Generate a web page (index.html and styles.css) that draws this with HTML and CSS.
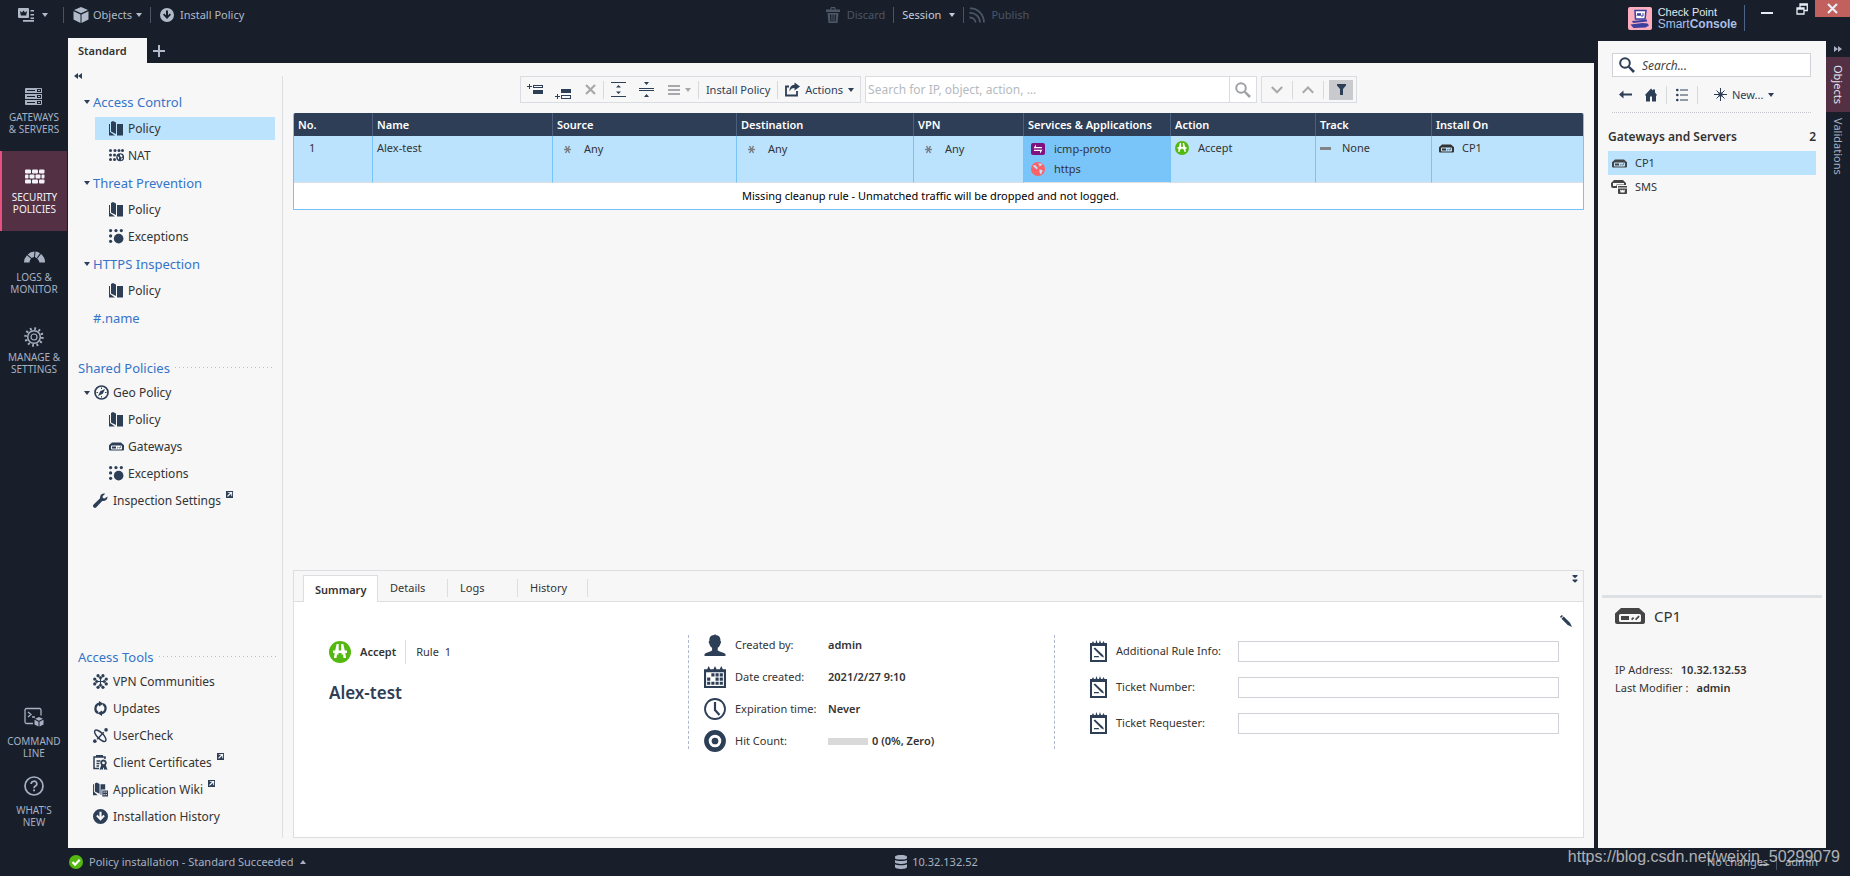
FILE: index.html
```html
<!DOCTYPE html>
<html lang="en">
<head>
<meta charset="utf-8">
<title>SmartConsole - Security Policies</title>
<link rel="stylesheet" href="styles.css">
</head>
<body>
<svg class="sprite" aria-hidden="true">
  <symbol id="i-caret" viewBox="0 0 6 4"><path d="M0 0h6L3 4z"/></symbol>
  <symbol id="i-caret-up" viewBox="0 0 6 4"><path d="M0 4h6L3 0z"/></symbol>
  <symbol id="i-menu" viewBox="0 0 17 14"><path fill-rule="evenodd" d="M1 0h9a1 1 0 0 1 1 1v8a1 1 0 0 1-1 1H1a1 1 0 0 1-1-1V1a1 1 0 0 1 1-1zm1 3 .8 4.500h5.400L9 3 7 4.500 5.500 2.500 4 4.500z"/><path d="M12.500 2H16v1.500h-3.500zM12.500 6H16v1.500h-3.500zM12.500 9.500H16V11h-3.500zM5 12h11v1.800H5z"/></symbol>
  <symbol id="i-cube" viewBox="0 0 16 16"><path d="M8 0l7 3-7 3.200L1 3zM.5 4.200l7 3.200V16l-7-3.500zM15.500 4.200l-7 3.200V16l7-3.500z"/></symbol>
  <symbol id="i-install" viewBox="0 0 14 14"><path fill-rule="evenodd" d="M7 0a7 7 0 1 1 0 14A7 7 0 0 1 7 0zM6 2.500v4.700L4.200 5.400 3 6.700l4 4.300 4-4.300-1.200-1.300L8 7.200V2.500z"/></symbol>
  <symbol id="i-trash" viewBox="0 0 14 16"><path fill-rule="evenodd" d="M5 0h4l1 2.500h4V5H0V2.500h4zM5.700 1.200l-.5 1.300h3.600l-.5-1.300zM1.500 6h11l-1 10h-9zM4 7.500l.3 7h1.200l-.2-7zm2.500 0v7h1v-7zm2.200 0-.2 7h1.200l.3-7z"/></symbol>
  <symbol id="i-publish" viewBox="0 0 16 16"><g fill="none" stroke="currentColor" stroke-width="1.800"><path d="M1 1.500C8 1 15 7 15 15.500M.5 6C6 5.500 11 9.500 11 15.500M.5 10.500c3.500 0 6 2 6 5"/></g></symbol>
  <symbol id="i-servers" viewBox="0 0 18 18"><path fill-rule="evenodd" d="M1 0h15a1 1 0 0 1 1 1v4H0V1a1 1 0 0 1 1-1zm1 2v1h8V2zm10-1v3h4V1zm1 1h2v1h-2zM0 6h17v5H0zm2 2v1h8V8zm10-1v3h4V7zm1 1h2v1h-2zM0 12h17v4a1 1 0 0 1-1 1H1a1 1 0 0 1-1-1zm2 2v1h8v-1zm10-1v3h4v-3zm1 1h2v1h-2z"/></symbol>
  <symbol id="i-wall" viewBox="0 0 20 15"><g><rect x="0" y="0" width="6" height="4" rx="1"/><rect x="7" y="0" width="6" height="4" rx="1"/><rect x="14" y="0" width="5.500" height="4" rx="1"/><rect x="0" y="5" width="3.500" height="4" rx="1"/><rect x="4.500" y="5" width="5" height="4" rx="1"/><rect x="10.500" y="5" width="5" height="4" rx="1"/><rect x="16.500" y="5" width="3" height="4" rx="1"/><rect x="0" y="10" width="6" height="4" rx="1"/><rect x="7" y="10" width="6" height="4" rx="1"/><rect x="14" y="10" width="5.500" height="4" rx="1"/></g></symbol>
  <symbol id="i-gauge" viewBox="0 0 21 12"><path d="M0 11.500a10.500 10.500 0 0 1 3-7.300l4 3.500a5.500 5.500 0 0 0-1.500 3.800zM3.700 3.500A10.500 10.500 0 0 1 10.500.5L10 5.900a5.500 5.500 0 0 0-2.400 1.200zM11.500.5a10.500 10.500 0 0 1 4.500 1.700l-3.500 5-1.500-1.300zM17 3a10.500 10.500 0 0 1 4 8.500h-5.500a5.500 5.500 0 0 0-2.300-3.800z"/></symbol>
  <symbol id="i-gear" viewBox="0 0 20 20"><g fill="none" stroke="currentColor"><circle cx="10" cy="10" r="6.300" stroke-width="1.500"/><circle cx="10" cy="10" r="3" stroke-width="1.200"/><circle cx="10" cy="10" r="8.400" stroke-width="2.600" stroke-dasharray="1.800 2.598"/></g></symbol>
  <symbol id="i-cmd" viewBox="0 0 20 19"><path fill="none" stroke="currentColor" stroke-width="1.300" d="M17 8V2.500A1.500 1.500 0 0 0 15.500 1h-13A1.500 1.500 0 0 0 1 2.500v12A1.500 1.500 0 0 0 2.500 16H9M4 4.500l3 2.500-3 2.500M8 9.500h3"/><path d="M15 9.500l4 1.800-4 1.900-4-1.900zM10.500 12.300l4 2V19l-4-2zM19.500 12.300l-4 2V19l4-2z"/></symbol>
  <symbol id="i-help" viewBox="0 0 20 20"><circle cx="10" cy="10" r="9" fill="none" stroke="currentColor" stroke-width="1.700"/><path fill="none" stroke="currentColor" stroke-width="1.700" d="M7.200 8a2.800 2.600 0 1 1 4.200 2.100c-1 .6-1.400 1-1.400 2.200"/><path d="M9.100 13.500H11v1.800H9.100z"/></symbol>
  <symbol id="i-left2" viewBox="0 0 8 6"><path d="M4 0v6L0 3zM8 0v6L4 3z"/></symbol>
  <symbol id="i-right2" viewBox="0 0 8 6"><path d="M4 0v6l4-3zM0 0v6l4-3z"/></symbol>
  <symbol id="i-down2" viewBox="0 0 6 8"><path d="M.5 0h5v1L3 3.300.5 1zM.5 4.500h5v1L3 7.800.5 5.500z"/></symbol>
  <symbol id="i-policy" viewBox="0 0 15 15"><path d="M0 3h1v8l5 3.500H0zM2 1l2-1 3 1.500V13l-5-2.500zM8 3h6v11.500H8z"/></symbol>
  <symbol id="i-nat" viewBox="0 0 15 13"><circle cx="1.500" cy="1.500" r="1.500"/><circle cx="6" cy="1.500" r="1.500"/><circle cx="10" cy="1.500" r="1.500"/><circle cx="13.500" cy="1.500" r="1.500"/><circle cx="1.500" cy="6" r="1.500"/><circle cx="5.500" cy="6" r="1.500"/><circle cx="1.500" cy="10.500" r="1.500"/><circle cx="5.500" cy="10.500" r="1.500"/><path fill-rule="evenodd" d="M11.200 4.300a4 4 0 1 1 0 8 4 4 0 0 1 0-8zm.3.800-.7 2.200 2 .9-1 3.300L14 9.500l-1-.8.500-2zM8.500 7l.6 3 .8.500.2-2.200z"/></symbol>
  <symbol id="i-exc" viewBox="0 0 14 14"><circle cx="1.500" cy="1.500" r="1.500"/><circle cx="6.500" cy="1.500" r="1.500"/><circle cx="11.500" cy="1.500" r="1.500"/><circle cx="1.500" cy="6.500" r="1.500"/><circle cx="1.500" cy="11.500" r="1.500"/><circle cx="9" cy="9" r="4.500"/></symbol>
  <symbol id="i-compass" viewBox="0 0 15 15"><circle cx="7.500" cy="7.500" r="6.500" fill="none" stroke="currentColor" stroke-width="1.700"/><path d="M11 4L8.800 8.800 4 11l2.200-4.800z"/><path d="M7 2.500h1V4H7zM7 11h1v1.500H7zM2.500 7H4v1H2.500zM11 7h1.500v1H11z"/></symbol>
  <symbol id="i-gw" viewBox="0 0 30 16"><path fill-rule="evenodd" d="M6 0h18l6 5.500V14a2 2 0 0 1-2 2H2a2 2 0 0 1-2-2V5.500zM5.500 6A1.500 1.500 0 0 0 4 7.500v5A1.500 1.500 0 0 0 5.500 14h19a1.500 1.500 0 0 0 1.500-1.500v-5A1.500 1.500 0 0 0 24.500 6z"/><path d="M6 8h8v4H6zM16 11l2-2 1.200 1.200-2 2zM20 11l3.500-3.500 1.200 1.200-3.500 3.500z"/></symbol>
  <symbol id="i-gwsms" viewBox="0 0 17 14"><path fill-rule="evenodd" d="M3 0h9l3 3v2H6v3H2a2 2 0 0 1-2-2V3zM2 3v3h3.500V4.500H13V3z"/><path fill-rule="evenodd" d="M7 6h9v1.500H7zM7 8.500h9V13a1 1 0 0 1-1 1H8a1 1 0 0 1-1-1zM9 9.500l.5 3h4l.5-3-1.500 1-1-1-1 1z"/></symbol>
  <symbol id="i-wrench" viewBox="0 0 14 14"><path d="M13.500 3.200l-2.700 2-1.600-.5L9 3l2.300-2.400C9 0 6.200 1.500 6.600 5L.6 10.800a1.700 1.700 0 0 0 2.500 2.500L8.600 7.500c3 .4 5.300-1.500 4.900-4.300z"/></symbol>
  <symbol id="i-ext" viewBox="0 0 8 8"><path fill-rule="evenodd" d="M0 0h8v8H0zM2 1v1h2.800L1.200 5.600l1 1L6 3v3h1V1z"/></symbol>
  <symbol id="i-vpn" viewBox="0 0 14 14"><path fill="none" stroke="currentColor" d="M7 7V2M7 7v5M7 7H2M7 7h5"/><circle cx="4.700" cy="1.600" r="1.500"/><circle cx="9.300" cy="1.600" r="1.500"/><circle cx="4.700" cy="12.400" r="1.500"/><circle cx="9.300" cy="12.400" r="1.500"/><circle cx="1.600" cy="4.700" r="1.500"/><circle cx="1.600" cy="9.300" r="1.500"/><circle cx="12.400" cy="4.700" r="1.500"/><circle cx="12.400" cy="9.300" r="1.500"/><path fill="none" stroke="currentColor" d="M5 2l2 3 2-3M5 12l2-3 2 3M2 5l3 2-3 2M12 5L9 7l3 2"/></symbol>
  <symbol id="i-update" viewBox="0 0 14 15"><path fill="none" stroke="currentColor" stroke-width="2.200" d="M4.500 12A5 5 0 0 1 6 2.700M9.500 3A5 5 0 0 1 8 12.300"/><path d="M5.500 0L10 2.800 5.500 5.600zM8.500 9.400v5.600L4 12.200z"/></symbol>
  <symbol id="i-usercheck" viewBox="0 0 14 14"><g fill="none" stroke="currentColor" stroke-width="1.400"><ellipse cx="6.800" cy="7.200" rx="7" ry="2.800" transform="rotate(45 6.800 7.200)"/><path d="M4 10.500L10 4"/></g><circle cx="12.200" cy="1.800" r="1.700"/><circle cx="1.700" cy="12.300" r="1.700"/></symbol>
  <symbol id="i-cert" viewBox="0 0 15 15"><path fill="none" stroke="currentColor" stroke-width="1.500" d="M6 13.500H1V2h11v2M3.500 6h4M3.500 8.500h3M3.500 11H6"/><path d="M3 0h7v2H3z"/><path fill-rule="evenodd" d="M10.500 4.500a3.300 3.300 0 0 1 2.300 5.500l1.700 5-2-.8-1 .8-1-2.800-1 2.800-1-.8-2 .8L8.200 10a3.300 3.300 0 0 1 2.300-5.500zm0 2a1.400 1.400 0 1 0 0 2.800 1.400 1.400 0 0 0 0-2.800z"/></symbol>
  <symbol id="i-wiki" viewBox="0 0 16 15"><path d="M0 2h1v8l4 3.500H0zM2 1l2-1 3 1.500V12l-5-2.500zM8 2h5v5.500H9V13H8z"/><path fill-rule="evenodd" d="M10 8.500h6V15h-6zm1.200 1.200V11h1.200V9.700zm2.300 0V11h1.200V9.700zm-2.300 2.600v1.200h1.200v-1.200zm2.300 0v1.200h1.200v-1.200z"/></symbol>
  <symbol id="i-addabove" viewBox="0 0 16 12"><path d="M2 0h1v2h2v1H3v2H2V3H0V2h2zM6 6h10v4H6z"/><path fill-rule="evenodd" d="M6 1h10v3H6zm1 1v1h8V2z"/></symbol>
  <symbol id="i-addbelow" viewBox="0 0 16 12"><path d="M2 5h1v2h2v1H3v2H2V8H0V7h2zM6 0h10v4H6z"/><path fill-rule="evenodd" d="M6 6h10v4H6zm1 1v2h8V7z"/></symbol>
  <symbol id="i-x" viewBox="0 0 11 11"><path fill="none" stroke="currentColor" stroke-width="2.200" d="M1 1l9 9M10 1l-9 9"/></symbol>
  <symbol id="i-expand" viewBox="0 0 15 15"><path d="M0 0h15v1H0zM0 14h15v1H0zM7.500 3L10 5.500H5zM7.500 12L5 9.500h5z"/></symbol>
  <symbol id="i-collapse" viewBox="0 0 15 15"><path d="M0 6h15v1H0zM0 8h15v1H0zM5 0h5L7.500 3zM5 15h5l-2.500-3z"/></symbol>
  <symbol id="i-lines" viewBox="0 0 12 10"><path d="M0 0h12v2H0zM0 4h12v2H0zM0 8h12v2H0z"/></symbol>
  <symbol id="i-share" viewBox="0 0 15 14"><path fill="none" stroke="currentColor" stroke-width="1.800" d="M4 4H1v9h11V8.500"/><path d="M9.500 0L15 4 9.500 8V5.500C7 5.500 5.500 6.500 4.500 9 4.500 5 6 2.500 9.500 2.300z"/></symbol>
  <symbol id="i-search" viewBox="0 0 16 16"><circle cx="6" cy="6" r="4.800" fill="none" stroke="currentColor" stroke-width="2"/><path d="M9 10.500l1.500-1.500L16 14l-2 2z"/></symbol>
  <symbol id="i-chev" viewBox="0 0 12 8"><path fill="none" stroke="currentColor" stroke-width="2" d="M.8 1L6 6.300 11.200 1"/></symbol>
  <symbol id="i-chevup" viewBox="0 0 12 8"><path fill="none" stroke="currentColor" stroke-width="2" d="M.8 6.800L6 1.500l5.200 5.300"/></symbol>
  <symbol id="i-filter" viewBox="0 0 9 11"><path d="M0 0h9v1.500L6 5v6H3V5L0 1.500z"/></symbol>
  <symbol id="i-star" viewBox="0 0 9 9"><path fill="none" stroke="currentColor" stroke-width="1.500" d="M1 4.500h7M2.500 1l4 7M6.500 1l-4 7"/></symbol>
  <symbol id="i-icmp" viewBox="0 0 14 12"><rect width="14" height="12" rx="2" fill="#81117f"/><path fill="#fff" d="M5 1.500V4h6v1.200H2.500zM9 10.500V8H3V6.800h8.500z"/></symbol>
  <symbol id="i-globe" viewBox="0 0 14 14"><circle cx="7" cy="7" r="7" fill="#fb6265"/><path fill="#bfe0f8" d="M2.500 3l2.500.5.500 1L7 6 5.500 7.500l-1-1.500-2-1zM7 1l2 .7 1-.5 1.500 1.300-1.500 1L8.500 4.500 8 3zM8.500 7.500l3 .5-.5 2.500-1.500 2-1-2.500z"/></symbol>
  <symbol id="i-accept" viewBox="0 0 22 22"><circle cx="11" cy="11" r="11" fill="#55b810"/><path fill="#fff" fill-rule="evenodd" d="M7.600 3h2.200v6.500H12V3h2.300l1.500 6.500H18V12h-1.700l.8 5h-2.600l-.4-3.500H8L7.500 17H4.900l.8-5H4V9.500h2.200z"/><path fill="#55b810" d="M9.900 3.500h2.200v5.500H9.900zM9.500 12h3v5h-3z"/></symbol>
  <symbol id="i-user" viewBox="0 0 20 21"><path d="M0 21v-1.800c1.500-1.700 5-2.200 7.200-3.500v-2.500C5.600 12 4.800 10.500 4.600 9c-.9-.5-.8-2 0-2.200C4.400 3 6 1.200 9 1l1.800-1-.3 1c3.300.2 5 2.200 4.700 5.800.8.200.9 1.700 0 2.200-.2 1.500-1 3-2.600 4.200v2.500c2.200 1.300 5.900 1.800 7.400 3.500V21z"/></symbol>
  <symbol id="i-cal" viewBox="0 0 21 21"><path fill-rule="evenodd" d="M0 3h3l1.500-3L6 3h3l1.500-3L12 3h3l1.500-3L18 3h3v18H0zm2 3v13h17V6z"/><path d="M7 7h3v3H7zM11 7h3v3h-3zM15 7h3v3h-3zM3 11h3v3H3zM11 11h3v3h-3zM15 11h3v3h-3zM3 15h3v3H3zM7 15h3v3H7zM11 15h3v3h-3zM15 15h3v3h-3z"/></symbol>
  <symbol id="i-clock" viewBox="0 0 22 22"><circle cx="11" cy="11" r="10" fill="none" stroke="currentColor" stroke-width="1.800"/><path fill="none" stroke="currentColor" stroke-width="2.200" d="M11 4v8l4.500 5"/></symbol>
  <symbol id="i-target" viewBox="0 0 21 21"><circle cx="10.500" cy="10.500" r="8.200" fill="none" stroke="currentColor" stroke-width="4.400"/><circle cx="10.500" cy="10.500" r="3.200"/></symbol>
  <symbol id="i-note" viewBox="0 0 17 22"><path fill-rule="evenodd" d="M0 3h2l1-2 1 2h1.500l1-3 1 3H9l1-3 1 3h1.500l1-2 1 2H17v19H0zm2 3v14h13V6z"/><path d="M3.500 8.500L5 7.500l8 7.500 1 2.500-2.500-1zM4 16h4.500l1 1.300H4z"/></symbol>
  <symbol id="i-pencil" viewBox="0 0 12 12"><path d="M0 1.800L1.800 0 3 1 1 3zM1.500 3.700L3.700 1.500l6.300 6.200L12 12 7.700 10z"/></symbol>
  <symbol id="i-back" viewBox="0 0 13 8"><path d="M0 4l4.500-4v3H13v2H4.500v3z"/></symbol>
  <symbol id="i-home" viewBox="0 0 12 13"><path fill-rule="evenodd" d="M6 0l2 2V1h2v3l2 2.500-.7.700H11V13H1V7.200H.7L0 6.500zM5 8v5h2V8z"/></symbol>
  <symbol id="i-list" viewBox="0 0 12 13"><path d="M4 1h8v1H4zM4 6h8v1H4zM4 11h8v1H4z"/><circle cx="1.300" cy="1.500" r="1.300"/><circle cx="1.300" cy="6.500" r="1.300"/><circle cx="1.300" cy="11.500" r="1.300"/></symbol>
  <symbol id="i-spark" viewBox="0 0 13 13"><path fill="none" stroke="currentColor" d="M6.500 0v13M0 6.500h13M2.500 2.500l8 8M10.500 2.500l-8 8"/><circle cx="6.500" cy="6.500" r="2.300"/></symbol>
  <symbol id="i-ok" viewBox="0 0 14 14"><circle cx="7" cy="7" r="7" fill="#55b810"/><path fill="none" stroke="#fff" stroke-width="2.200" d="M3.500 7l2.500 2.700 4.700-5"/></symbol>
  <symbol id="i-db" viewBox="0 0 12 14"><path d="M0 2c0-2.600 12-2.600 12 0v1.200c0 1.800-12 1.800-12 0zM0 5c2 1.300 10 1.300 12 0v2.500c0 1.900-12 1.900-12 0zM0 9.300c2 1.300 10 1.300 12 0V12c0 2.600-12 2.600-12 0z"/></symbol>
  <symbol id="i-logo" viewBox="0 0 24 23"><rect width="24" height="23" rx="2" fill="#fbaec0"/><path fill="#fff" stroke="#3b3f9d" stroke-width="1.500" d="M7 3.500h11l-1 8.500H7.500z"/><path fill="none" stroke="#3b3f9d" d="M9 9l1-3 1 3 1-3 1 3h2V6"/><path fill="#3b3f9d" d="M4 14l15-1.500v2L5 16zM2.500 17.500l12-1.500 5 .5 1.500 2-3.500 2-12 .5z"/></symbol>
</svg>

<div class="app">
  <header class="topbar">
    <div class="top-left">
      <button class="tb-btn app-menu" aria-label="Application menu"><svg class="w17"><use href="#i-menu"/></svg><svg class="caret"><use href="#i-caret"/></svg></button>
      <button class="tb-btn objects-menu"><svg class="w16"><use href="#i-cube"/></svg>Objects<svg class="caret"><use href="#i-caret"/></svg></button>
      <button class="tb-btn top-install"><svg class="w14"><use href="#i-install"/></svg>Install Policy</button>
    </div>
    <div class="top-mid">
      <button class="tb-btn off"><svg class="w14"><use href="#i-trash"/></svg>Discard</button>
      <button class="tb-btn session">Session<svg class="caret"><use href="#i-caret"/></svg></button>
      <button class="tb-btn off publish"><svg class="w16"><use href="#i-publish"/></svg>Publish</button>
    </div>
    <div class="top-right">
      <div class="brand"><svg class="logo"><use href="#i-logo"/></svg><div class="brand-text"><span>Check Point</span><span class="brand-name">Smart<b>Console</b></span></div></div>
      <div class="win">
        <button class="win-btn min" aria-label="Minimize"><span class="dash"></span></button>
        <button class="win-btn restore" aria-label="Restore"><svg class="w12" viewBox="0 0 12 12"><path fill="none" stroke="#e8edf5" stroke-width="1.300" d="M1 5h7v6H1zM4 5V1h7.300v6.500H8M1 6h7M4 2h7"/></svg></button>
        <button class="win-btn close" aria-label="Close"><svg class="w11"><use href="#i-x"/></svg></button>
      </div>
    </div>
  </header>

  <div class="body">
    <nav class="rail">
      <a href="#"><svg class="w18"><use href="#i-servers"/></svg><span>GATEWAYS<br>&amp; SERVERS</span></a>
      <a href="#" class="on"><svg class="w20"><use href="#i-wall"/></svg><span>SECURITY<br>POLICIES</span></a>
      <a href="#"><svg class="w21"><use href="#i-gauge"/></svg><span>LOGS &amp;<br>MONITOR</span></a>
      <a href="#"><svg class="w20"><use href="#i-gear"/></svg><span>MANAGE &amp;<br>SETTINGS</span></a>
      <div class="rail-bottom">
        <a href="#"><svg class="w20"><use href="#i-cmd"/></svg><span>COMMAND<br>LINE</span></a>
        <a href="#"><svg class="w20"><use href="#i-help"/></svg><span>WHAT'S<br>NEW</span></a>
      </div>
    </nav>

    <main class="main">
      <div class="doc-tabs"><button class="doc-tab">Standard</button><button class="add-tab" aria-label="New tab"><svg class="w12" viewBox="0 0 12 12"><path d="M5 0h2v5h5v2H7v5H5V7H0V5h5z"/></svg></button></div>
      <div class="workspace">
        <nav class="tree">
          <button class="collapse" aria-label="Collapse"><svg><use href="#i-left2"/></svg></button>
          <a href="#" class="group"><svg class="caret"><use href="#i-caret"/></svg>Access Control</a>
          <a href="#" class="leaf picked"><svg class="ico"><use href="#i-policy"/></svg>Policy</a>
          <a href="#" class="leaf"><svg class="ico"><use href="#i-nat"/></svg>NAT</a>
          <a href="#" class="group"><svg class="caret"><use href="#i-caret"/></svg>Threat Prevention</a>
          <a href="#" class="leaf"><svg class="ico"><use href="#i-policy"/></svg>Policy</a>
          <a href="#" class="leaf"><svg class="ico"><use href="#i-exc"/></svg>Exceptions</a>
          <a href="#" class="group"><svg class="caret"><use href="#i-caret"/></svg>HTTPS Inspection</a>
          <a href="#" class="leaf"><svg class="ico"><use href="#i-policy"/></svg>Policy</a>
          <a href="#" class="group no-caret">#.name</a>
          <h2 class="section">Shared Policies</h2>
          <a href="#" class="item with-caret"><svg class="caret"><use href="#i-caret"/></svg><svg class="ico"><use href="#i-compass"/></svg>Geo Policy</a>
          <a href="#" class="leaf"><svg class="ico"><use href="#i-policy"/></svg>Policy</a>
          <a href="#" class="leaf"><svg class="ico"><use href="#i-gw"/></svg>Gateways</a>
          <a href="#" class="leaf"><svg class="ico"><use href="#i-exc"/></svg>Exceptions</a>
          <a href="#" class="item"><svg class="ico"><use href="#i-wrench"/></svg>Inspection Settings<svg class="ext"><use href="#i-ext"/></svg></a>
          <h2 class="section tools">Access Tools</h2>
          <a href="#" class="item"><svg class="ico"><use href="#i-vpn"/></svg>VPN Communities</a>
          <a href="#" class="item"><svg class="ico"><use href="#i-update"/></svg>Updates</a>
          <a href="#" class="item"><svg class="ico"><use href="#i-usercheck"/></svg>UserCheck</a>
          <a href="#" class="item"><svg class="ico"><use href="#i-cert"/></svg>Client Certificates<svg class="ext"><use href="#i-ext"/></svg></a>
          <a href="#" class="item"><svg class="ico"><use href="#i-wiki"/></svg>Application Wiki<svg class="ext"><use href="#i-ext"/></svg></a>
          <a href="#" class="item"><svg class="ico"><use href="#i-install"/></svg>Installation History</a>
        </nav>
        <div class="divider"></div>

        <section class="content">
          <div class="toolbar">
            <div class="tools-box">
              <button class="tool" aria-label="Add rule above"><svg class="w16"><use href="#i-addabove"/></svg></button>
              <button class="tool add-below" aria-label="Add rule below"><svg class="w16"><use href="#i-addbelow"/></svg></button>
              <button class="tool gray" aria-label="Delete rule"><svg class="w11"><use href="#i-x"/></svg></button>
              <i class="sep"></i>
              <button class="tool" aria-label="Expand"><svg class="w15"><use href="#i-expand"/></svg></button>
              <button class="tool spaced" aria-label="Collapse"><svg class="w15"><use href="#i-collapse"/></svg></button>
              <button class="tool gray" aria-label="Row view"><svg class="w12"><use href="#i-lines"/></svg><svg class="caret"><use href="#i-caret"/></svg></button>
              <i class="sep"></i>
              <button class="tool">Install Policy</button>
              <i class="sep"></i>
              <button class="tool"><svg class="w15"><use href="#i-share"/></svg>Actions<svg class="caret"><use href="#i-caret"/></svg></button>
            </div>
            <div class="find"><input type="text" aria-label="Search rules" placeholder="Search for IP, object, action, ..."><button aria-label="Search"><svg class="w16"><use href="#i-search"/></svg></button></div>
            <div class="steps"><button aria-label="Next"><svg class="w12"><use href="#i-chev"/></svg></button><i class="sep"></i><button aria-label="Previous"><svg class="w12"><use href="#i-chevup"/></svg></button><i class="sep"></i><button class="filter" aria-label="Filter"><svg class="w11"><use href="#i-filter"/></svg></button></div>
          </div>

          <table class="rules">
            <colgroup><col class="c-no"><col class="c-name"><col class="c-src"><col class="c-dst"><col class="c-vpn"><col class="c-svc"><col class="c-act"><col class="c-trk"><col></colgroup>
            <thead><tr><th>No.</th><th>Name</th><th>Source</th><th>Destination</th><th>VPN</th><th>Services &amp; Applications</th><th>Action</th><th>Track</th><th>Install On</th></tr></thead>
            <tbody>
              <tr class="rule">
                <td class="no">1</td><td>Alex-test</td>
                <td><div class="cell any"><svg class="star"><use href="#i-star"/></svg>Any</div></td>
                <td><div class="cell any"><svg class="star"><use href="#i-star"/></svg>Any</div></td>
                <td><div class="cell any"><svg class="star"><use href="#i-star"/></svg>Any</div></td>
                <td class="svc"><div class="cell"><svg class="w14"><use href="#i-icmp"/></svg>icmp-proto</div><div class="cell"><svg class="w14"><use href="#i-globe"/></svg>https</div></td>
                <td><div class="cell act"><svg class="w14"><use href="#i-accept"/></svg>Accept</div></td>
                <td><div class="cell track"><i class="none-mark"></i>None</div></td>
                <td><div class="cell gw"><svg class="w15"><use href="#i-gw"/></svg>CP1</div></td>
              </tr>
              <tr class="warn"><td colspan="9">Missing cleanup rule - Unmatched traffic will be dropped and not logged.</td></tr>
            </tbody>
          </table>

          <section class="details">
            <div class="tabs"><button class="tab active">Summary</button><button class="tab">Details</button><button class="tab">Logs</button><button class="tab">History</button><button class="shrink" aria-label="Minimize details"><svg><use href="#i-down2"/></svg></button></div>
            <div class="panes">
              <div class="pane-a">
                <div class="verdict"><svg class="w22"><use href="#i-accept"/></svg><b>Accept</b><span class="rule-no">Rule&nbsp; 1</span></div>
                <h1>Alex-test</h1>
              </div>
              <dl class="pane-b">
                <div><dt><svg class="w22"><use href="#i-user"/></svg>Created by:</dt><dd>admin</dd></div>
                <div><dt><svg class="w22"><use href="#i-cal"/></svg>Date created:</dt><dd>2021/2/27 9:10</dd></div>
                <div><dt><svg class="w22"><use href="#i-clock"/></svg>Expiration time:</dt><dd>Never</dd></div>
                <div><dt><svg class="w22"><use href="#i-target"/></svg>Hit Count:</dt><dd><i class="hits"></i>0 (0%, Zero)</dd></div>
              </dl>
              <form class="pane-c">
                <button type="button" class="edit" aria-label="Edit"><svg class="w12"><use href="#i-pencil"/></svg></button>
                <div class="field"><svg class="note"><use href="#i-note"/></svg><label for="info">Additional Rule Info:</label><input id="info" type="text"></div>
                <div class="field"><svg class="note"><use href="#i-note"/></svg><label for="num">Ticket Number:</label><input id="num" type="text"></div>
                <div class="field"><svg class="note"><use href="#i-note"/></svg><label for="req">Ticket Requester:</label><input id="req" type="text"></div>
              </form>
            </div>
          </section>
        </section>
      </div>
    </main>

    <aside class="objects">
      <div class="obj-search"><svg class="w16"><use href="#i-search"/></svg><input type="text" aria-label="Search objects" placeholder="Search..."></div>
      <div class="obj-tools">
        <button aria-label="Back"><svg class="w13"><use href="#i-back"/></svg></button>
        <button aria-label="Home"><svg class="w12"><use href="#i-home"/></svg></button><i class="sep"></i>
        <button aria-label="List view"><svg class="w12"><use href="#i-list"/></svg></button><i class="sep"></i>
        <button class="new"><svg class="w13"><use href="#i-spark"/></svg>New...<svg class="caret"><use href="#i-caret"/></svg></button>
      </div>
      <h3 class="obj-head"><span>Gateways and Servers</span><span>2</span></h3>
      <a href="#" class="obj picked"><svg class="w15"><use href="#i-gw"/></svg>CP1</a>
      <a href="#" class="obj"><svg class="w17"><use href="#i-gwsms"/></svg>SMS</a>
      <section class="obj-info">
        <h4><svg class="w30"><use href="#i-gw"/></svg>CP1</h4>
        <p>IP Address:<b>10.32.132.53</b></p>
        <p>Last Modifier :<b>admin</b></p>
      </section>
    </aside>

    <div class="side-tabs">
      <button class="side-collapse" aria-label="Collapse panel"><svg><use href="#i-right2"/></svg></button>
      <button class="side-tab on">Objects</button>
      <button class="side-tab">Validations</button>
    </div>
  </div>

  <footer class="status">
    <button class="task"><svg class="w14"><use href="#i-ok"/></svg>Policy installation - Standard Succeeded<svg class="caret"><use href="#i-caret-up"/></svg></button>
    <span class="server"><svg class="w12"><use href="#i-db"/></svg>10.32.132.52</span>
    <span class="session-info"><span>No changes</span><span class="who">admin</span></span>
    <span class="url">https://blog.csdn.net/weixin_50299079</span>
  </footer>
</div>
</body>
</html>
```

FILE: styles.css
```css
* { box-sizing: border-box; }
body { margin: 0; font: 11px/16px "Noto Sans", "Open Sans", sans-serif; color: #333; background: #181f2b; }
button, input { font: inherit; color: inherit; }
button { background: none; border: 0; padding: 0; margin: 0; display: flex; align-items: center; }
a { color: inherit; text-decoration: none; }
h1, h2, h3, h4, p, dl, dd { margin: 0; }
svg { fill: currentColor; flex: none; display: block; }
.sprite { position: absolute; width: 0; height: 0; }

.w11 { width: 11px; height: 11px; }
.w12 { width: 12px; height: 14px; }
.w13 { width: 13px; height: 13px; }
.w14 { width: 14px; height: 16px; }
.w15 { width: 15px; height: 15px; }
.w16 { width: 16px; height: 16px; }
.w17 { width: 17px; height: 14px; }
.w18 { width: 18px; height: 18px; }
.w20 { width: 20px; height: 20px; }
.w21 { width: 21px; height: 12px; }
.w22 { width: 22px; height: 22px; }
.w30 { width: 30px; height: 16px; }
.caret { width: 6px; height: 4px; }
.sep { width: 1px; height: 18px; background: #d6dadd; flex: none; }

.app { min-height: 100vh; display: flex; flex-direction: column; position: relative; }

/* title bar */
.topbar { height: 38px; display: flex; justify-content: space-between; color: #b0bac9; }
.top-left, .top-mid { display: flex; align-items: center; height: 30px; flex: 1; }
.tb-btn { gap: 6px; height: 16px; padding: 0 8px 0 9px; border-left: 1px solid #4b5463; }
.app-menu { border: 0; padding: 0 15px 0 18px; gap: 7px; }
.objects-menu { gap: 4px; }
.top-mid { justify-content: center; flex: 0 0 auto; padding-left: 4px; }
.off { color: #4c5665; }
.off:first-child { border: 0; gap: 7px; }
.session { color: #c3cddc; gap: 8px; padding-left: 8px; }
.publish { padding-left: 5px; }
.top-right { flex: 1; display: flex; justify-content: flex-end; }
.brand { display: flex; align-items: center; gap: 6px; height: 26px; margin-top: 5px; padding-right: 7px; border-right: 1px solid #4d6389; }
.logo { width: 24px; height: 23px; }
.brand-text { display: flex; flex-direction: column; font: 11px/12px "Liberation Sans", sans-serif; color: #e3e8f0; }
.brand-name { font-size: 12px; color: #a9bfe6; }
.win { display: flex; height: 17px; }
.win-btn { width: 35px; justify-content: center; color: #e8edf5; }
.min { width: 44px; }
.restore { width: 26px; }
.dash { width: 12px; height: 2px; background: #e8edf5; margin-top: 8px; }
.close { background: #c1605c; }

.body { flex: 1; display: flex; }

/* main module rail */
.rail { width: 68px; padding-top: 33px; display: flex; flex-direction: column; font-size: 10px; line-height: 12px; text-align: center; color: #a7b1c2; }
.rail a { display: flex; flex-direction: column; align-items: center; gap: 4px; height: 80px; padding-top: 16px; }
.rail svg { height: 20px; }
.rail a.on { background: #543045; color: #f0f2f7; border-left: 2px solid #e8517f; margin-right: 1px; }
.rail-bottom { margin-top: auto; padding-bottom: 7px; }
.rail .rail-bottom a { height: 69px; padding-top: 4px; gap: 8px; }

.main { flex: 1; min-width: 0; display: flex; flex-direction: column; }
.doc-tabs { display: flex; height: 25px; color: #b0bac9; gap: 6px; }
.doc-tab { background: #f7f7f7; color: #333; font-weight: 600; padding: 0 20px 0 10px; }
.workspace { flex: 1; display: flex; background: #f7f7f7; }

/* policy tree */
.tree { width: 214px; display: flex; flex-direction: column; padding-bottom: 18px; font-size: 12px; }
.collapse { width: 30px; height: 25px; padding-left: 6px; color: #2d3e57; }
.collapse svg { width: 8px; height: 6px; }
.group, .leaf, .item { display: flex; align-items: center; height: 23px; margin: 2px 7px 2px 16px; flex: none; }
.group { font-size: 13px; color: #3474c9; gap: 3px; }
.tree .caret { color: #2d3e57; }
.no-caret { padding-left: 9px; }
.leaf { margin-left: 27px; padding-left: 14px; gap: 4px; }
.item { margin-left: 25px; gap: 5px; }
.with-caret { margin-left: 16px; gap: 4px; }
.picked { background: #bbe3fe; }
.ico { width: 15px; height: 15px; color: #2d3e57; }
.ext { width: 7px; height: 7px; color: #2d3e57; margin-bottom: 12px; }
.section { display: flex; align-items: center; gap: 5px; height: 23px; margin: 25px 7px 0 10px; font-size: 13px; font-weight: 400; color: #3474c9; flex: none; }
.section::after { content: ""; flex: 1; height: 1px; background: repeating-linear-gradient(90deg, #b9bcc2 0 1px, transparent 1px 4px); }
.tools { margin-top: auto; margin-right: 5px; }
.divider { width: 1px; margin: 13px 0 10px; background: #dcdee2; }

.content { flex: 1; min-width: 0; display: flex; flex-direction: column; padding: 13px 10px 10px; color: #333; }

/* rule toolbar */
.toolbar { display: flex; justify-content: center; gap: 4px; height: 27px; color: #2d3e57; }
.tools-box, .find, .steps { display: flex; align-items: center; border: 1px solid #d9dce1; }
.tools-box { padding: 0 6px; gap: 7px; }
.tool { gap: 5px; height: 20px; }
.tool.add-below { margin-left: 5px; padding-top: 10px; }
.tool.gray { color: #a7a8ab; margin-left: 7px; }
.tool.spaced { margin-left: 6px; }
.find { width: 392px; background: #fff; }
.find input { flex: 1; min-width: 0; border: 0; padding: 0 2px; height: 25px; font-size: 12px; outline: 0; }
.find input::placeholder { color: #b5bac0; opacity: 1; }
.find button { width: 27px; height: 25px; justify-content: center; border-left: 1px solid #d9dce1; color: #9fa1a5; }
.steps { padding: 0 3px 0 9px; gap: 9px; }
.steps button { color: #a7a8ab; }
.steps .filter { width: 24px; height: 20px; justify-content: center; background: #c9cacd; color: #2d3e57; margin-left: -4px; }

/* rule base */
.rules { margin-top: 10px; width: 100%; table-layout: fixed; border-collapse: separate; border-spacing: 0; border: 1px solid #77c2f6; border-top: 0; border-radius: 2px 2px 0 0; overflow: hidden; }
.c-no { width: 79px; }
.c-name { width: 180px; }
.c-src { width: 184px; }
.c-dst { width: 177px; }
.c-vpn { width: 110px; }
.c-svc { width: 147px; }
.c-act { width: 145px; }
.c-trk { width: 116px; }
.rules th { height: 23px; padding: 1px 0 0 4px; text-align: left; font-weight: 600; color: #fff; background: #2e3e57; border-right: 1px solid #4a5f80; white-space: nowrap; }
.rules th:last-child, .rules td:last-child { border-right: 0; }
.rule td { height: 47px; padding: 4px 0 0 4px; vertical-align: top; background: #bbe3fe; border-right: 1px solid #77c2f6; border-bottom: 1px solid #dcdfe3; }
.rules .no { padding-left: 15px; }
.cell { display: flex; align-items: center; height: 16px; }
.any { gap: 12px; height: 18px; padding-left: 6px; }
.star { width: 9px; height: 9px; color: #7b7f85; }
.rules .svc { background: #79c4f9; padding-top: 3px; }
.svc .cell { gap: 9px; height: 20px; padding-left: 3px; }
.act { gap: 9px; }
.track { gap: 11px; }
.none-mark { width: 11px; height: 3px; background: #808388; }
.gw { gap: 8px; padding-left: 3px; }
.warn td { height: 26px; padding: 0 16px 0 0; background: #fff; text-align: center; color: #000; }

/* rule details */
.details { height: 268px; margin-top: auto; border: 1px solid #dcdee2; background: #fff; display: flex; flex-direction: column; }
.tabs { display: flex; height: 31px; padding: 4px 5px 0 9px; background: #f7f7f7; border-bottom: 1px solid #dcdee2; }
.tab { width: 70px; height: 18px; margin-top: 4px; padding-left: 12px; border-right: 1px solid #dcdee2; }
.tab.active { width: 75px; height: 27px; margin-top: 0; padding: 2px 0 0 11px; font-weight: 600; background: #fff; border: 1px solid #dcdee2; border-bottom: 0; }
.shrink { margin: 0 0 auto auto; color: #2d3e57; }
.shrink svg { width: 6px; height: 8px; }
.panes { flex: 1; display: grid; grid-template-columns: 394fr 367fr 528fr; padding-top: 31px; }
.pane-a { padding: 6px 0 0 35px; }
.verdict { display: flex; align-items: center; height: 26px; gap: 9px; }
.verdict b, .pane-b dd { font-weight: 600; }
.rule-no { border-left: 1px solid #dcdee2; line-height: 24px; padding-left: 10px; }
.pane-a h1 { margin-top: 16px; font-size: 17px; line-height: 24px; font-weight: 600; color: #2e3e57; }
.pane-b { height: 114px; margin-top: 2px; border: dashed #b0b8cc; border-width: 0 1px; padding-left: 15px; }
.pane-b div { display: flex; align-items: center; height: 32px; margin-top: -6px; margin-bottom: 6px; }
.pane-b dt { display: flex; align-items: center; gap: 9px; width: 124px; }
.pane-b svg, .note { color: #2d3e57; }
.pane-b dd { display: flex; align-items: center; gap: 4px; }
.hits { width: 40px; height: 7px; background: #d9d9d9; }
.pane-c { position: relative; padding: 0 24px 0 35px; }
.edit { position: absolute; right: 11px; top: -19px; color: #2d3e57; }
.field { display: flex; align-items: center; height: 36px; }
.note { width: 17px; height: 22px; }
.field label { width: 131px; padding-left: 9px; }
.field input { flex: 1; min-width: 0; height: 21px; border: 1px solid #cfd2d6; background: #fff; }

/* objects panel */
.objects { width: 228px; margin: 3px 0 0 4px; background: #f7f7f7; display: flex; flex-direction: column; }
.obj-search { display: flex; align-items: center; gap: 5px; height: 24px; margin: 12px 15px 0 14px; padding-left: 6px; background: #fff; border: 1px solid #cfd2d6; color: #2d3e57; }
.obj-search input { border: 0; outline: 0; flex: 1; min-width: 0; padding: 0 2px; height: 20px; font-style: italic; font-size: 12px; background: none; }
.obj-search input::placeholder { color: #444; opacity: 1; }
.obj-tools { display: flex; align-items: center; margin: 0 15px 0 14px; padding: 0 0 0 7px; height: 36px; gap: 9px; color: #2d3e57; border-bottom: 1px dotted #c3c6cc; }
.obj-tools button + button { margin-left: 4px; }
.new { gap: 5px; margin-left: 7px; }
.obj-head { display: flex; justify-content: space-between; margin: 16px 10px 6px; font-size: 12px; line-height: 16px; font-weight: 600; }
.obj { display: flex; align-items: center; gap: 8px; height: 24px; margin: 0 10px; padding-left: 4px; }
.obj .w17 { margin: 0 -1px; }
.obj-info { margin: auto 4px 0; height: 253px; border-top: 3px solid #dde0e4; padding: 6px 0 0 13px; }
.obj-info h4 { display: flex; align-items: center; gap: 9px; height: 24px; margin-bottom: 33px; font-size: 15px; font-weight: 400; }
.obj-info svg, .obj svg { color: #454545; }
.obj-info p { line-height: 18px; }
.obj-info b { margin-left: 8px; font-weight: 600; }

.side-tabs { width: 24px; display: flex; flex-direction: column; color: #a7b1c2; font-size: 11px; }
.side-collapse { height: 19px; justify-content: center; padding-top: 3px; }
.side-collapse svg { width: 8px; height: 6px; }
.side-tab { writing-mode: vertical-rl; width: 24px; justify-content: center; height: 69px; }
.side-tab.on { background: #543045; color: #e3e6ee; height: 55px; }

/* status bar */
.status { height: 28px; display: flex; align-items: center; padding: 0 32px 0 69px; color: #a7b1c2; }
.task { flex: 1; gap: 6px; }
.server { display: flex; gap: 5px; align-items: center; margin-right: 14px; }
.session-info { flex: 1; display: flex; justify-content: flex-end; gap: 8px; }
.who { border-left: 1px solid #4b5463; padding-left: 8px; }
.url { position: absolute; right: 10px; bottom: 9px; font: 16px/20px "Liberation Sans", sans-serif; color: rgba(226, 226, 226, .75); }
```
